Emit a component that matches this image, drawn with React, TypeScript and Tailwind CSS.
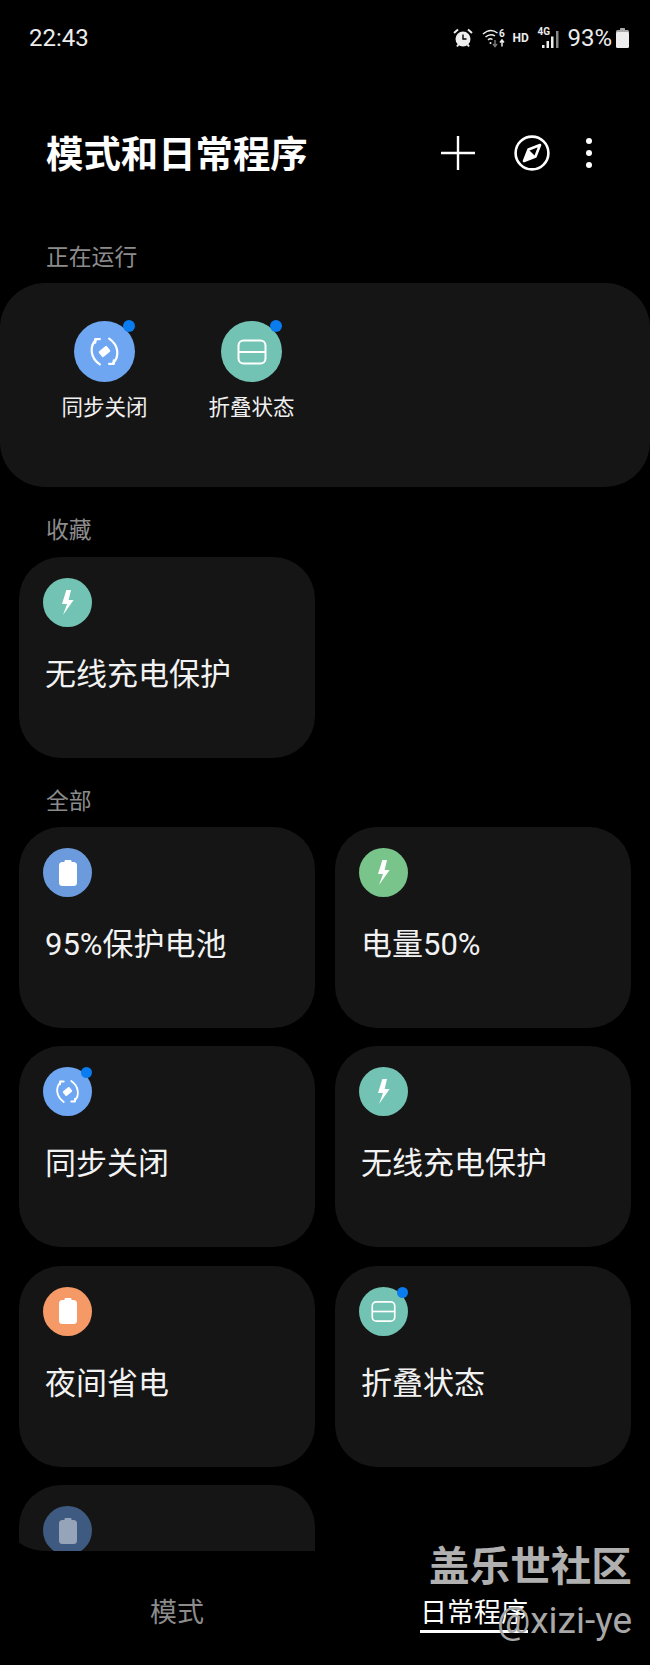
import React from 'react';

const FONT = "font-['Roboto','Noto_Sans_CJK_SC',sans-serif]";

const SyncIcon = ({ size }: { size: number }) => (
  <svg width={size} height={size} viewBox="0 0 30 30" fill="none" stroke="white" strokeWidth="2.2" strokeLinecap="round">
    <path d="M6 3 H10.5 M6 3 V6.5" />
    <path d="M6.5 4 C0.5 10 1 21 10.5 27.5" />
    <path d="M19.5 2.5 C29 9 29.5 20 23.5 26" />
    <path d="M19.5 27 H24 M24 27 V23.5" />
    <rect x="10" y="11.5" width="10" height="7" rx="1.2" fill="white" stroke="none" transform="rotate(-40 15 15)" />
  </svg>
);

const FoldIcon = ({ size }: { size: number }) => (
  <svg width={size} height={size} viewBox="0 0 30 30" fill="none" stroke="white" strokeWidth="2">
    <rect x="1.5" y="3.5" width="27" height="23" rx="5" />
    <path d="M1.5 15 H28.5" />
  </svg>
);

const BoltIcon = () => (
  <svg width="12" height="25" viewBox="0 0 36 75" fill="white">
    <path d="M13 0 L27 0 L20 30 L35 30 L3 75 L15 42 L0 42 Z" />
  </svg>
);

const BatteryIcon = ({ opacity = 1 }: { opacity?: number }) => (
  <svg width="18" height="26" viewBox="0 0 18 26" fill="white" fillOpacity={opacity}>
    <path d="M6.5 0 H11.5 Q12.5 0 12.5 1 V2 H14.5 Q18 2 18 5.5 V22.5 Q18 26 14.5 26 H3.5 Q0 26 0 22.5 V5.5 Q0 2 3.5 2 H5.5 V1 Q5.5 0 6.5 0 Z" />
  </svg>
);

const Dot = ({ big }: { big?: boolean }) => (
  <span
    className={
      big
        ? 'absolute right-[0px] top-[-1px] w-[12px] h-[12px] rounded-full bg-[#0a7cf0]'
        : 'absolute right-[0px] top-[0px] w-[11px] h-[11px] rounded-full bg-[#0a7cf0]'
    }
  />
);

type Kind = 'sync' | 'fold' | 'bolt' | 'battery' | 'batteryDim';

const Glyph = ({ kind, large }: { kind: Kind; large?: boolean }) => {
  if (kind === 'sync') return <SyncIcon size={large ? 31 : 25} />;
  if (kind === 'fold') return <FoldIcon size={large ? 30 : 25} />;
  if (kind === 'bolt') return <BoltIcon />;
  if (kind === 'batteryDim') return <BatteryIcon opacity={0.45} />;
  return <BatteryIcon />;
};

const RunningItem = ({ label, kind, color }: { label: string; kind: Kind; color: string }) => (
  <div className="w-[147px] flex flex-col items-center">
    <div className={`relative w-[61px] h-[61px] rounded-full flex items-center justify-center ${color}`}>
      <Glyph kind={kind} large />
      <Dot big />
    </div>
    <div className="mt-[11px] text-[21.5px] leading-[30px] text-[#f0f0f0]">{label}</div>
  </div>
);

const Card = ({
  label,
  kind,
  color,
  dot,
}: {
  label?: string;
  kind: Kind;
  color: string;
  dot?: boolean;
}) => (
  <div className="h-[201px] rounded-[42px] bg-[#151515] pl-[24px] pt-[21px]">
    <div className={`relative w-[49px] h-[49px] rounded-full flex items-center justify-center ${color}`}>
      <Glyph kind={kind} />
      {dot && <Dot />}
    </div>
    {label && <div className="mt-[28px] ml-[2px] text-[31px] leading-[40px] text-[#f2f2f2]">{label}</div>}
  </div>
);

const SectionLabel = ({ children, className }: { children: React.ReactNode; className: string }) => (
  <div className={`h-[30px] pl-[46px] text-[22.8px] leading-[30px] text-[#8c8c8c] ${className}`}>{children}</div>
);

const StatusBar = () => (
  <div className="h-[76px] pl-[29px] pr-[21px] flex items-center justify-between text-[#ececec]">
    <div className="text-[24px] leading-none">22:43</div>
    <div className="flex items-center">
      <svg width="20" height="20" viewBox="0 0 20 20" fill="none" className="mr-[9px]">
        <circle cx="10" cy="11" r="7.5" fill="#eee" />
        <path d="M10 6.5 V11 H13.5" stroke="#000" strokeWidth="1.4" fill="none" />
        <path d="M1 5 L5 1.5 M19 5 L15 1.5 M4 18.5 L5.5 16.5 M16 18.5 L14.5 16.5" stroke="#eee" strokeWidth="2" />
      </svg>
      <svg width="25" height="20" viewBox="0 0 25 20" fill="none" stroke="#eee" strokeWidth="1.5" className="mr-[5px]">
        <path d="M1 6 C6 1.5 11 1.5 15.5 5" />
        <path d="M3.5 9 C7 6 10 6 13 8" />
        <path d="M6 12 C7.5 10.5 9 10.5 10.5 11.5" />
        <circle cx="8.5" cy="15" r="1" fill="#eee" stroke="none" />
        <path d="M13 12 V18 M11 16 L13 18.5 L15 16" stroke="#777" />
        <path d="M20 18.5 V12.5 M18 14.5 L20 12 L22 14.5" />
        <text x="17" y="8.5" fontSize="10" fill="#eee" stroke="none" fontWeight="700" fontFamily="Roboto">6</text>
      </svg>
      <div className="mr-[8px] text-[12px] font-bold leading-none w-[17px]">HD</div>
      <div className="relative w-[24px] h-[20px] mr-[6px]">
        <span className="absolute left-0 top-[-1px] text-[10px] font-bold leading-none">4G</span>
        <svg width="24" height="20" viewBox="0 0 24 20" fill="#eee" className="absolute left-0 top-0">
          <rect x="5" y="17" width="2.5" height="3" />
          <rect x="9.5" y="13" width="2.5" height="7" />
          <rect x="14" y="8.5" width="2.5" height="11.5" />
          <rect x="19" y="3" width="2.5" height="17" fill="#888" />
        </svg>
      </div>
      <div className="text-[24px] leading-none mr-[4px]">93%</div>
      <svg width="13" height="20" viewBox="0 0 13 20">
        <rect x="4" y="0" width="5" height="3" rx="0.5" fill="#aaa" />
        <rect x="0" y="2" width="13" height="4" rx="1.5" fill="#aaa" />
        <rect x="0" y="4" width="13" height="16" rx="1.5" fill="#eee" />
      </svg>
    </div>
  </div>
);

const Header = () => (
  <div className="h-[154px] pl-[46px] pr-[58px] flex items-center">
    <h1 className="pt-[4px] text-[37.4px] leading-[44px] font-bold text-white">模式和日常程序</h1>
    <div className="ml-auto flex items-center">
      <svg width="36" height="36" viewBox="0 0 36 36" stroke="white" strokeWidth="2.4" className="mr-[38px] -ml-[1px]">
        <path d="M18 1 V35 M1 18 H35" />
      </svg>
      <svg width="36" height="36" viewBox="0 0 36 36" fill="none" stroke="white" strokeWidth="2.6" className="mr-[36px]">
        <circle cx="18" cy="18" r="16.4" />
        <path d="M26 10 L21.5 21.5 L10 26 L14.5 14.5 Z" strokeLinejoin="round" />
        <path d="M14.5 14.5 L21.5 21.5 L10 26 Z" fill="white" stroke="none" />
      </svg>
      <div className="flex flex-col gap-[5.5px]">
        <span className="w-[6.5px] h-[6.5px] rounded-full bg-white" />
        <span className="w-[6.5px] h-[6.5px] rounded-full bg-white" />
        <span className="w-[6.5px] h-[6.5px] rounded-full bg-white" />
      </div>
    </div>
  </div>
);

const App = () => {
  return (
    <div className={`relative w-[650px] h-[1665px] bg-black overflow-hidden flex flex-col ${FONT}`}>
      <StatusBar />
      <div className="h-[1475px] shrink-0 overflow-hidden rounded-b-[45px]">
        <Header />
        <SectionLabel className="mt-[13px] mb-[10px]">正在运行</SectionLabel>
        <div className="h-[204px] rounded-[45px] bg-[#151515] pt-[38px] pl-[31px] flex">
          <RunningItem label="同步关闭" kind="sync" color="bg-[#6ea6f2]" />
          <RunningItem label="折叠状态" kind="fold" color="bg-[#72c3b3]" />
        </div>
        <SectionLabel className="mt-[29px] mb-[11px]">收藏</SectionLabel>
        <div className="grid grid-cols-2 gap-x-[20px] px-[19px]">
          <Card label="无线充电保护" kind="bolt" color="bg-[#72c3b3]" />
        </div>
        <SectionLabel className="mt-[29px] mb-[10px]">全部</SectionLabel>
        <div className="grid grid-cols-2 gap-x-[20px] gap-y-[18.4px] px-[19px]">
          <Card label="95%保护电池" kind="battery" color="bg-[#6b9bdc]" />
          <Card label="电量50%" kind="bolt" color="bg-[#78c48a]" />
          <Card label="同步关闭" kind="sync" color="bg-[#6ea6f2]" dot />
          <Card label="无线充电保护" kind="bolt" color="bg-[#72c3b3]" />
          <Card label="夜间省电" kind="battery" color="bg-[#f59a66]" />
          <Card label="折叠状态" kind="fold" color="bg-[#72c3b3]" dot />
          <Card kind="batteryDim" color="bg-[#3f5a80]" />
        </div>
      </div>
      <div className="flex-1 flex pt-[47px] text-[27px] leading-[30px]">
        <div className="w-[354px] text-center text-[#8c8c8c]">模式</div>
        <div className="ml-[66px] w-[108px] h-[35px] text-center text-white border-b-[3px] border-white whitespace-nowrap">日常程序</div>
      </div>
      <div className="absolute left-[429px] top-[1543px] text-[40.6px] leading-[48px] font-bold text-[#b0b0b0] whitespace-nowrap">盖乐世社区</div>
      <div className="absolute left-[497px] top-[1599px] text-[37px] leading-[44px] text-[#a8a8a8] whitespace-nowrap">@xizi-ye</div>
    </div>
  );
};

export default App;
